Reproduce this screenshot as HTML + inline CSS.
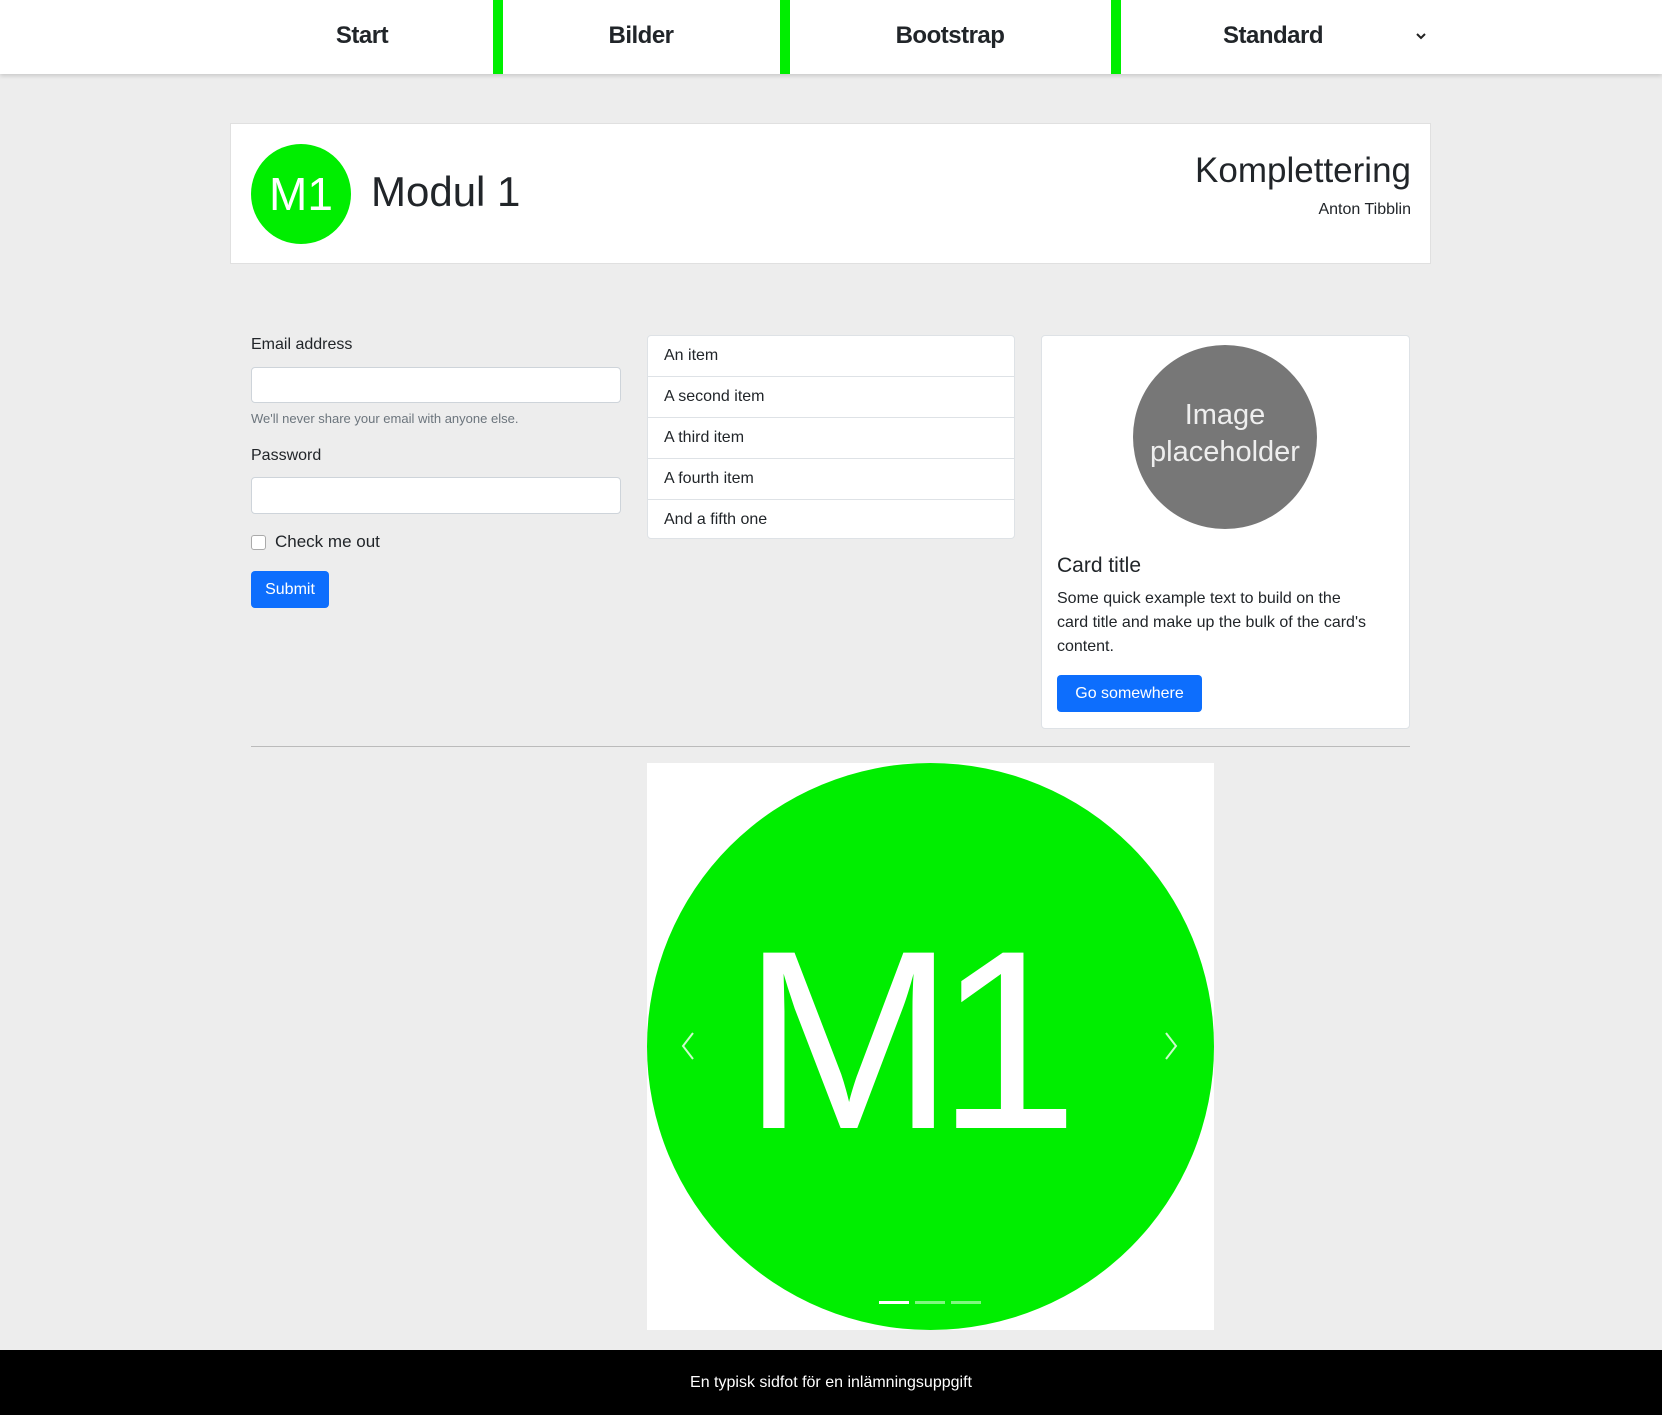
<!DOCTYPE html>
<html><head><meta charset="utf-8"><style>
*{box-sizing:border-box;margin:0;padding:0}
body{width:1662px;height:1415px;background:#ededed;font-family:"Liberation Sans","DejaVu Sans",sans-serif;color:#212529;position:relative;overflow:hidden}
.a{position:absolute}
nav{position:absolute;left:0;top:0;width:1662px;height:74px;background:#fff;box-shadow:0 2px 4px rgba(0,0,0,.15)}
.nt{position:absolute;top:22px;font-size:24px;font-weight:bold;transform:translateX(-50%);letter-spacing:-0.5px}
.gb{position:absolute;top:0;width:10px;height:74px;background:#00ee00}
.inp{position:absolute;background:#fff;border:1px solid #ced4da;border-radius:4px}
.li{position:absolute;left:0;width:368px;height:41px;border-bottom:1px solid #dee2e6;padding-left:16px;line-height:40px;font-size:16px}
.btn{position:absolute;background:#0d6efd;color:#fff;border-radius:4px;font-size:16px;text-align:center}
</style></head><body>
<nav>
<div class="gb" style="left:493px"></div><div class="gb" style="left:780px"></div><div class="gb" style="left:1111px"></div>
<div class="nt" style="left:362px">Start</div>
<div class="nt" style="left:641px">Bilder</div>
<div class="nt" style="left:950px">Bootstrap</div>
<div class="nt" style="left:1273px">Standard</div>
<svg class="a" style="left:1415px;top:32px" width="12" height="10"><path d="M2 2l4 4 4-4" stroke="#222" stroke-width="2" fill="none"/></svg>
</nav>
<div class="a" style="left:230px;top:123px;width:1201px;height:141px;background:#fff;border:1px solid #e0e0e0"></div>
<div class="a" style="left:251px;top:144px;width:100px;height:100px;border-radius:50%;background:#00ee00;color:#fff;font-size:46px;line-height:100px;text-align:center">M1</div>
<div class="a" style="left:371px;top:166px;font-size:42px;line-height:52px">Modul 1</div>
<div class="a" style="right:251px;top:150px;font-size:35px;line-height:42px">Komplettering</div>
<div class="a" style="right:251px;top:200px;font-size:16px;line-height:20px">Anton Tibblin</div>

<div class="a" style="left:251px;top:336px;font-size:16px">Email address</div>
<div class="inp" style="left:251px;top:367px;width:370px;height:36px"></div>
<div class="a" style="left:251px;top:411px;font-size:13px;color:#6c757d">We'll never share your email with anyone else.</div>
<div class="a" style="left:251px;top:447px;font-size:16px">Password</div>
<div class="inp" style="left:251px;top:477px;width:370px;height:37px"></div>
<div class="a" style="left:251px;top:535px;width:15px;height:15px;border:1px solid #aaa;border-radius:3px;background:#fff"></div>
<div class="a" style="left:275px;top:532px;font-size:17px">Check me out</div>
<div class="btn" style="left:251px;top:571px;width:78px;height:37px;line-height:37px">Submit</div>

<div class="a" style="left:647px;top:335px;width:368px;height:204px;background:#fff;border:1px solid #dee2e6;border-radius:4px;overflow:hidden">
<div class="li" style="top:0">An item</div>
<div class="li" style="top:41px">A second item</div>
<div class="li" style="top:82px">A third item</div>
<div class="li" style="top:123px">A fourth item</div>
<div class="li" style="top:164px;border:0">And a fifth one</div>
</div>

<div class="a" style="left:1041px;top:335px;width:369px;height:394px;background:#fff;border:1px solid #dee2e6;border-radius:4px"></div>
<div class="a" style="left:1133px;top:345px;width:184px;height:184px;border-radius:50%;background:#777;color:#eee;font-size:29px;line-height:37px;text-align:center;padding-top:52px">Image<br>placeholder</div>
<div class="a" style="left:1057px;top:554px;font-size:21px">Card title</div>
<div class="a" style="left:1057px;top:587px;width:310px;font-size:16px;line-height:24px">Some quick example text to build on the card title and make up the bulk of the card's content.</div>
<div class="btn" style="left:1057px;top:675px;width:145px;height:37px;line-height:37px">Go somewhere</div>

<div class="a" style="left:251px;top:746px;width:1159px;height:1px;background:#bbb"></div>
<div class="a" style="left:647px;top:763px;width:567px;height:567px;background:#fff;overflow:hidden">
<div class="a" style="left:0;top:0;width:567px;height:567px;border-radius:50%;background:#00ee00"></div>
<div class="a" style="left:-29px;top:128px;width:567px;text-align:center;color:#fff;font-size:255px;line-height:300px;letter-spacing:-18px">M1</div>
<svg class="a" style="left:33px;top:268px" width="16" height="30"><path d="M13 2L3 15l10 13" stroke="#fff" stroke-width="2" fill="none" opacity=".8"/></svg>
<svg class="a" style="left:516px;top:268px" width="16" height="30"><path d="M3 2l10 13L3 28" stroke="#fff" stroke-width="2" fill="none" opacity=".8"/></svg>
<div class="a" style="left:232px;top:538px;width:30px;height:3px;background:#fff"></div>
<div class="a" style="left:268px;top:538px;width:30px;height:3px;background:#fff;opacity:.5"></div>
<div class="a" style="left:304px;top:538px;width:30px;height:3px;background:#fff;opacity:.5"></div>
</div>
<div class="a" style="left:0;top:1350px;width:1662px;height:65px;background:#000;color:#fff;font-size:16px;text-align:center;line-height:65px">En typisk sidfot för en inlämningsuppgift</div>
</body></html>
